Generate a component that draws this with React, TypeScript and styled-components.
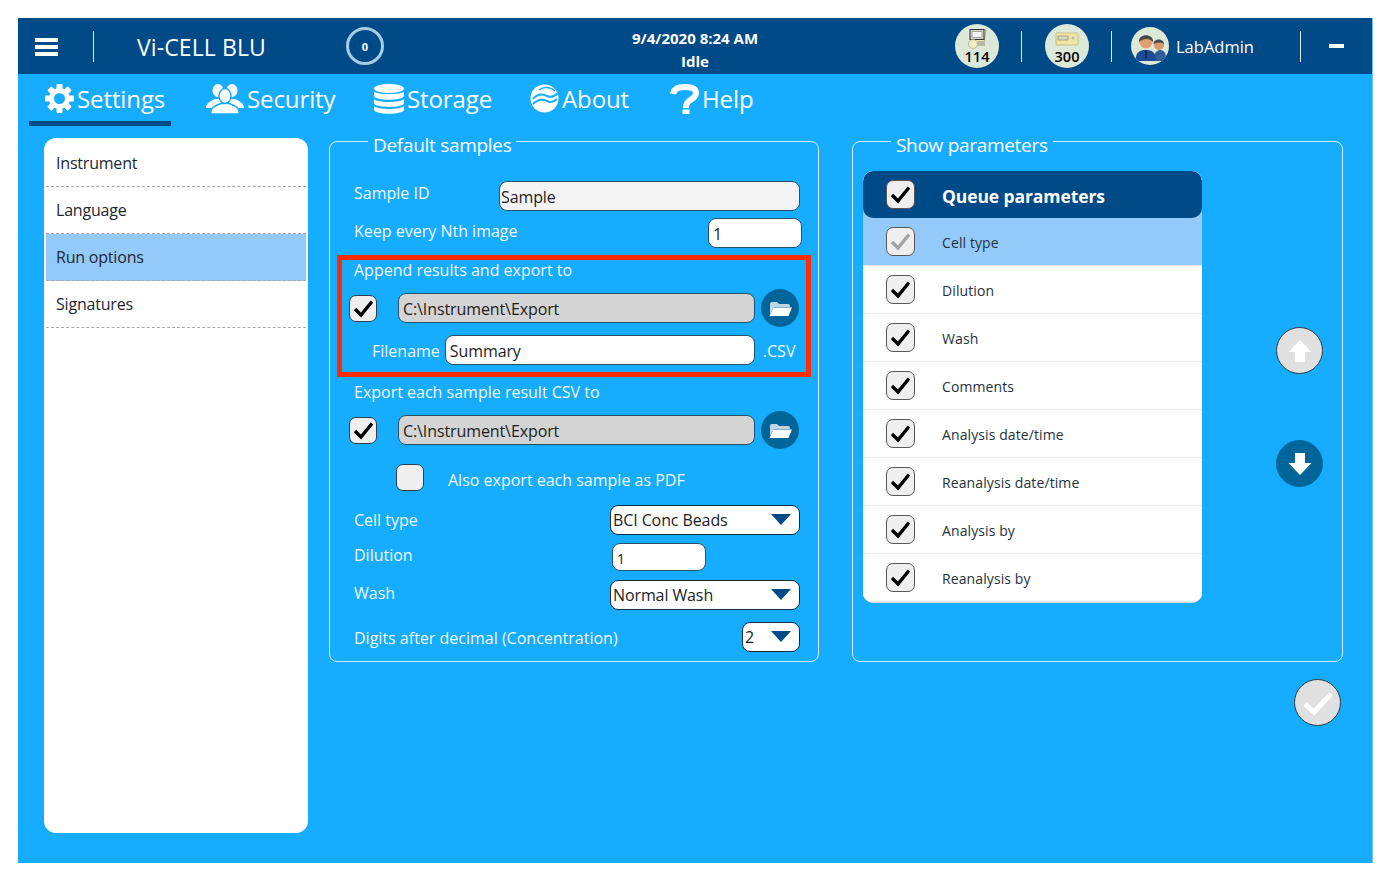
import React from "react";
import styled, { createGlobalStyle } from "styled-components";

const FONT = `"Open Sans", "Noto Sans", "Liberation Sans", sans-serif`;

const GlobalStyle = createGlobalStyle`
    html, body {
        margin: 0;
        padding: 0;
        background: #ffffff;
    }
    body {
        padding: 18px 0 0 18px;
        font-family: ${FONT};
    }
`;

const Window = styled.div`
    width: 1354px;
    height: 845px;
    background: #16acff;
    border-right: 1px solid #6ec3f7;
    display: flex;
    flex-direction: column;
`;

const Header = styled.header`
    height: 56px;
    flex: none;
    background: #004a87;
    color: #ffffff;
    display: flex;
    align-items: center;
    padding-left: 17px;
    box-sizing: border-box;
`;

const Hamburger = styled.div`
    width: 23px;
    height: 18px;
    margin-top: 2px;
    display: flex;
    flex-direction: column;
    justify-content: space-between;
    span {
        display: block;
        height: 4px;
        background: #ffffff;
    }
`;

const Divider = styled.div<{ $left: number }>`
    width: 1px;
    height: 31px;
    margin-left: ${({ $left }) => $left}px;
    margin-top: 1px;
    background: #dce9f2;
    flex: none;
`;

const Title = styled.div`
    margin-left: 43px;
    width: 209px;
    font-size: 23px;
    letter-spacing: 0.1px;
    line-height: 30px;
    margin-top: 2px;
    white-space: nowrap;
`;

const Counter = styled.div`
    width: 38px;
    height: 38px;
    box-sizing: border-box;
    border: 3px solid #a5cde5;
    border-radius: 50%;
    font-size: 11px;
    font-weight: 700;
    display: flex;
    align-items: center;
    justify-content: center;
    flex: none;
`;

const Status = styled.div`
    width: 210px;
    margin-left: 206px;
    text-align: center;
    font-size: 15px;
    font-weight: 700;
    line-height: 23px;
    margin-top: 8px;
    white-space: nowrap;
`;

const Consumable = styled.div<{ $left: number }>`
    width: 44px;
    height: 44px;
    margin-left: ${({ $left }) => $left}px;
    border-radius: 50%;
    background: #dce8d8;
    flex: none;
    display: flex;
    flex-direction: column;
    align-items: center;
    color: #000000;
    font-size: 14.5px;
    font-weight: 600;
    line-height: 15px;
    svg {
        margin-top: 5px;
        height: 20px;
        flex: none;
    }
`;

const Avatar = styled.div`
    width: 38px;
    height: 38px;
    margin-left: 19px;
    border-radius: 50%;
    background: #dce8d8;
    overflow: hidden;
    flex: none;
`;

const UserName = styled.div`
    width: 124px;
    margin-left: 7px;
    font-size: 16.5px;
    font-weight: 500;
    margin-top: 1px;
`;

const MinimizeBar = styled.div`
    width: 15px;
    height: 4px;
    margin-left: 28px;
    background: #ffffff;
`;

const TabBar = styled.nav`
    height: 52px;
    flex: none;
    display: flex;
    padding-left: 11px;
    color: #ffffff;
`;

const Tab = styled.div<{ $width: number; $gap: number; $pad?: number; $active?: boolean }>`
    width: ${({ $width }) => $width}px;
    margin-right: ${({ $gap }) => $gap}px;
    padding: 2px 0 0 ${({ $pad }) => $pad ?? 0}px;
    box-sizing: border-box;
    height: 52px;
    display: flex;
    align-items: center;
    gap: 3px;
    font-size: 24px;
    letter-spacing: -0.1px;
    border-bottom: 5px solid ${({ $active }) => ($active ? "#004a87" : "transparent")};
    white-space: nowrap;
    svg {
        flex: none;
    }
`;

const Content = styled.main`
    flex: 1;
    display: flex;
    gap: 21px;
    padding: 12px 0 30px 26px;
    min-height: 0;
`;

const Sidebar = styled.aside`
    width: 264px;
    box-sizing: border-box;
    padding: 2px 2px 0;
    background: #ffffff;
    border-radius: 12px;
`;

const SidebarItem = styled.div<{ $selected?: boolean }>`
    height: 47px;
    box-sizing: border-box;
    padding-left: 10px;
    display: flex;
    align-items: center;
    font-size: 16px;
    letter-spacing: -0.2px;
    color: #1c2733;
    background: ${({ $selected }) => ($selected ? "#94caf9" : "transparent")};
    border-bottom: 1px dashed #a8a8a8;
`;

const MainColumn = styled.div`
    display: flex;
    flex-direction: column;
    align-items: flex-end;
    padding-top: 3px;
`;

const Panels = styled.div`
    display: flex;
    gap: 33px;
`;

const Panel = styled.section<{ $width: number }>`
    position: relative;
    width: ${({ $width }) => $width}px;
    height: 521px;
    box-sizing: border-box;
    border: 1px solid #d6eeff;
    border-radius: 8px;
`;

const Legend = styled.div`
    position: absolute;
    top: -10px;
    left: 38px;
    padding: 0 5px;
    background: #16acff;
    color: #ffffff;
    font-size: 19px;
    letter-spacing: -0.3px;
    line-height: 26px;
    white-space: nowrap;
`;

const FormBody = styled.div`
    display: flex;
    flex-direction: column;
    padding: 39px 18px 0 7px;
`;

const FormRow = styled.div<{ $height: number; $top?: number; $right?: number }>`
    height: ${({ $height }) => $height}px;
    margin-top: ${({ $top }) => $top ?? 0}px;
    padding: 0 ${({ $right }) => $right ?? 0}px 0 17px;
    display: flex;
    align-items: center;
    justify-content: space-between;
    flex: none;
`;

const Label = styled.div<{ $up?: number }>`
    color: #f2f9ff;
    font-size: 16px;
    white-space: nowrap;
    margin-top: ${({ $up }) => -($up ?? 0)}px;
`;

const TextBox = styled.div<{ $width: number; $height?: number; $pad?: number; $tone?: "white" | "light" | "grey" }>`
    width: ${({ $width }) => $width}px;
    height: ${({ $height }) => $height ?? 30}px;
    box-sizing: border-box;
    flex: none;
    display: flex;
    align-items: center;
    padding: 2px 0 0 ${({ $pad }) => $pad ?? 3}px;
    background: ${({ $tone }) =>
        $tone === "grey" ? "#d4d4d4" : $tone === "light" ? "#f4f4f4" : "#ffffff"};
    border: 1px solid #24506e;
    border-radius: 8px;
    color: #1d1d1d;
    font-size: 16px;
    letter-spacing: -0.1px;
    white-space: nowrap;
`;

const KeepBox = styled(TextBox)`
    margin-right: -2px;
`;

const DilutionBox = styled(TextBox)`
    font-size: 14px;
`;

const PathBox = styled(TextBox)`
    margin-left: 21px;
`;

const FilenameBox = styled(TextBox)`
    margin-left: 5px;
`;

const Select = styled(TextBox)`
    justify-content: space-between;
    padding: 0 8px 0 2px;
    border-color: #0b2c44;
`;

const Caret = styled.span`
    width: 0;
    height: 0;
    border-left: 10px solid transparent;
    border-right: 10px solid transparent;
    border-top: 11px solid #004a87;
    margin-top: -2px;
`;

const Highlight = styled.div`
    margin-top: 7px;
    width: 474px;
    height: 122px;
    box-sizing: border-box;
    border: 5px solid #ff2a00;
    flex: none;
`;

const HighlightLabel = styled(Label)`
    padding-left: 12px;
    line-height: 20px;
`;

const PathRow = styled.div<{ $top: number; $left: number; $height?: number }>`
    display: flex;
    align-items: center;
    height: ${({ $height }) => $height ?? 38}px;
    margin-top: ${({ $top }) => $top}px;
    margin-left: ${({ $left }) => $left}px;
    flex: none;
`;

const PdfLabel = styled(Label)`
    margin-left: 24px;
`;

const CheckFrame = styled.div<{ $small?: boolean }>`
    width: ${({ $small }) => ($small ? 28 : 29)}px;
    height: ${({ $small }) => ($small ? 27 : 29)}px;
    box-sizing: border-box;
    flex: none;
    display: flex;
    align-items: center;
    justify-content: center;
    background: #efefef;
    border: 1px solid ${({ $small }) => ($small ? "#2b3f4c" : "#555555")};
    border-radius: 7px;
    svg {
        width: 21px;
        height: 19px;
    }
`;

const FolderButton = styled.div`
    width: 38px;
    height: 38px;
    margin-left: 6px;
    border-radius: 50%;
    background: #00669a;
    display: flex;
    align-items: center;
    justify-content: center;
    flex: none;
`;

const CsvLabel = styled.div`
    margin: 2px 0 0 8px;
    color: #f2f9ff;
    font-size: 16px;
`;

const SplitPanel = styled.div`
    display: flex;
    padding: 29px 0 0 10px;
`;

const QueueTable = styled.div`
    width: 339px;
    height: 432px;
    background: #ffffff;
    border-radius: 10px;
    flex: none;
    border-bottom: 1px solid #dedede;
    box-sizing: border-box;
    overflow: hidden;
`;

const QueueHeader = styled.div`
    height: 47px;
    background: #004a87;
    border-radius: 10px;
    display: flex;
    align-items: center;
    padding-left: 23px;
    color: #ffffff;
    font-size: 17.5px;
    font-weight: 700;
    letter-spacing: -0.1px;
`;

const HeaderBack = styled.div`
    background: #94caf9;
`;

const QueueRow = styled.div<{ $selected?: boolean }>`
    height: 48px;
    box-sizing: border-box;
    display: flex;
    align-items: center;
    padding-left: 23px;
    color: #25313d;
    font-size: 14px;
    letter-spacing: 0.1px;
    background: ${({ $selected }) => ($selected ? "#94caf9" : "#ffffff")};
    border-bottom: 1px solid #e6e6e6;
`;

const RowText = styled.span`
    margin: 2px 0 0 27px;
`;

const ArrowColumn = styled.div`
    margin-left: 74px;
    padding-top: 156px;
    display: flex;
    flex-direction: column;
    gap: 66px;
`;

const RoundButton = styled.div<{ $active?: boolean }>`
    width: 47px;
    height: 47px;
    box-sizing: border-box;
    border-radius: 50%;
    display: flex;
    align-items: center;
    justify-content: center;
    background: ${({ $active }) => ($active ? "#00669a" : "#e0e0e0")};
    border: 1px solid ${({ $active }) => ($active ? "#00669a" : "#2d3a44")};
`;

const Footer = styled.div`
    margin-top: 17px;
    margin-right: 2px;
`;

const Check = ({ dim }: { dim?: boolean }) => (
    <svg viewBox="0 0 21 19">
        <path
            d="M2 10 L8 16 L19 2.5"
            fill="none"
            stroke={dim ? "#a3a3a3" : "#000000"}
            strokeWidth="3.4"
        />
    </svg>
);

const Checkbox = ({ dim }: { dim?: boolean }) => (
    <CheckFrame>
        <Check dim={dim} />
    </CheckFrame>
);

const SmallCheckbox = ({ checked = true }: { checked?: boolean }) => (
    <CheckFrame $small>{checked ? <Check /> : null}</CheckFrame>
);

const FolderIcon = () => (
    <svg width="23" height="15" viewBox="0 0 23 15">
        <path d="M1 3 Q1 1 3 1 H8 L10 3 H19 Q21 3 21 5 V6 H5 L1 13 Z" fill="#bcd6e6" />
        <path d="M4.5 6.5 H23 L19.5 15 H0.5 Z" fill="#ffffff" />
    </svg>
);

const GearIcon = () => (
    <svg width="29" height="29" viewBox="0 0 29 29">
        {[0, 45, 90, 135, 180, 225, 270, 315].map((angle) => (
            <rect
                key={angle}
                x="11.5"
                y="0"
                width="6"
                height="6"
                rx="1"
                fill="#ffffff"
                transform={`rotate(${angle} 14.5 14.5)`}
            />
        ))}
        <circle cx="14.5" cy="14.5" r="8" fill="none" stroke="#ffffff" strokeWidth="5" />
    </svg>
);

const PeopleIcon = () => (
    <svg width="38" height="30" viewBox="0 0 38 30">
        <ellipse cx="12" cy="6.5" rx="5.5" ry="6.5" fill="#ffffff" />
        <ellipse cx="26" cy="6.5" rx="5.5" ry="6.5" fill="#ffffff" />
        <path d="M0 24 C0 19 5 17 9 15 H15 V24 Z" fill="#ffffff" />
        <path d="M38 24 C38 19 33 17 29 15 H23 V24 Z" fill="#ffffff" />
        <ellipse cx="19" cy="12" rx="6" ry="7.5" fill="#ffffff" stroke="#16acff" strokeWidth="1.4" />
        <path
            d="M5 30 V27 C5 23 11 21 15 19.5 H23 C27 21 33 23 33 27 V30 Z"
            fill="#ffffff"
            stroke="#16acff"
            strokeWidth="1.4"
        />
    </svg>
);

const DatabaseIcon = () => (
    <svg width="30" height="30" viewBox="0 0 30 30">
        <ellipse cx="15" cy="4.5" rx="15" ry="4.5" fill="#ffffff" />
        <path d="M0 7.5 C2 11 28 11 30 7.5 V12 C28 17 2 17 0 12 Z" fill="#ffffff" />
        <path d="M0 15 C2 19 28 19 30 15 V19.5 C28 24 2 24 0 19.5 Z" fill="#ffffff" />
        <path d="M0 22 C2 26 28 26 30 22 V26 C28 31 2 31 0 26 Z" fill="#ffffff" />
    </svg>
);

const GlobeIcon = () => (
    <svg width="29" height="29" viewBox="0 0 29 29">
        <circle cx="14.5" cy="14.5" r="14" fill="#ffffff" />
        <path d="M3 15 C8 9 13 10 17 12 C21 14 24 13 28 9" fill="none" stroke="#16acff" strokeWidth="2" />
        <path d="M3 20 C8 15 13 15 17 17 C21 19 24 18 27 15" fill="none" stroke="#16acff" strokeWidth="2" />
        <path d="M9 6 C14 2 21 3 25 7" fill="none" stroke="#16acff" strokeWidth="1.5" />
    </svg>
);

const QuestionIcon = () => (
    <svg width="29" height="30" viewBox="0 0 29 30">
        <path
            d="M3 10 C4 4 9 3 15 3 C22 3 26 5 26 9 C26 14 21 15 18 18 C16 20 16 21 16 24"
            fill="none"
            stroke="#ffffff"
            strokeWidth="6"
        />
        <rect x="12.5" y="25.5" width="7" height="4.5" fill="#ffffff" />
    </svg>
);

const InstrumentIcon = () => (
    <svg viewBox="0 0 22 20" width="22">
        <path d="M8 1 H20 L18 14 H8 Z" fill="#f1e6b0" stroke="#9a9468" strokeWidth="0.7" />
        <rect x="4" y="0.5" width="14" height="10" fill="#d5d5d5" stroke="#333333" />
        <rect x="6" y="2.5" width="10" height="6" fill="#f4f4f4" stroke="#777777" strokeWidth="0.6" />
        <circle cx="7" cy="15" r="4.5" fill="#f3edc8" stroke="#a8a27a" strokeWidth="0.7" />
        <rect x="12" y="12" width="7" height="5" fill="#b9b9a5" />
    </svg>
);

const ReagentIcon = () => (
    <svg viewBox="0 0 26 20" width="26">
        <rect x="2" y="4" width="22" height="12" rx="1" fill="#f2e6a6" stroke="#b9ad72" strokeWidth="0.7" />
        <rect x="4" y="7" width="10" height="4" fill="#d9d9c4" stroke="#777766" strokeWidth="0.6" />
        <circle cx="19" cy="9" r="1.6" fill="#b8b8a0" />
    </svg>
);

const UsersIcon = () => (
    <svg width="38" height="38" viewBox="0 0 38 38">
        <path d="M23 31 C23 25 27 23 29 23 C33 23 35 26 35 31 L34 34 H23 Z" fill="#2e5e9e" />
        <circle cx="28" cy="18" r="5" fill="#d99a6c" />
        <path d="M22.5 17 C22.5 11 33 11 33 17 C30 15 26 15 22.5 17 Z" fill="#4a4a4a" />
        <path d="M5 34 C4 25 9 23 15 23 C21 23 25 25 25 34 Z" fill="#1f4a96" />
        <circle cx="15" cy="15" r="6.5" fill="#e0a070" />
        <path d="M8 15 C7 6 23 6 22 15 C19 11 12 11 8 15 Z" fill="#4a4a4a" />
        <path d="M15 23 V32" stroke="#0d2450" strokeWidth="1.5" />
    </svg>
);

const QUEUE_ROWS = [
    "Cell type",
    "Dilution",
    "Wash",
    "Comments",
    "Analysis date/time",
    "Reanalysis date/time",
    "Analysis by",
    "Reanalysis by",
];

const SIDEBAR_ITEMS = ["Instrument", "Language", "Run options", "Signatures"];

export default function App() {
    return (
        <>
            <GlobalStyle />
            <Window>
                <Header>
                    <Hamburger>
                        <span />
                        <span />
                        <span />
                    </Hamburger>
                    <Divider $left={35} />
                    <Title>Vi-CELL BLU</Title>
                    <Counter>0</Counter>
                    <Status>
                        <div>9/4/2020 8:24 AM</div>
                        <div>Idle</div>
                    </Status>
                    <Consumable $left={155}>
                        <InstrumentIcon />
                        <span>114</span>
                    </Consumable>
                    <Divider $left={22} />
                    <Consumable $left={23}>
                        <ReagentIcon />
                        <span>300</span>
                    </Consumable>
                    <Divider $left={22} />
                    <Avatar>
                        <UsersIcon />
                    </Avatar>
                    <UserName>LabAdmin</UserName>
                    <Divider $left={0} />
                    <MinimizeBar />
                </Header>
                <TabBar>
                    <Tab $width={142} $gap={35} $pad={16} $active>
                        <GearIcon />
                        Settings
                    </Tab>
                    <Tab $width={130} $gap={38}>
                        <PeopleIcon />
                        Security
                    </Tab>
                    <Tab $width={118} $gap={38}>
                        <DatabaseIcon />
                        Storage
                    </Tab>
                    <Tab $width={101} $gap={39}>
                        <GlobeIcon />
                        About
                    </Tab>
                    <Tab $width={84} $gap={0}>
                        <QuestionIcon />
                        Help
                    </Tab>
                </TabBar>
                <Content>
                    <Sidebar>
                        {SIDEBAR_ITEMS.map((item) => (
                            <SidebarItem key={item} $selected={item === "Run options"}>
                                {item}
                            </SidebarItem>
                        ))}
                    </Sidebar>
                    <MainColumn>
                        <Panels>
                            <Panel $width={490}>
                                <Legend>Default samples</Legend>
                                <FormBody>
                                    <FormRow $height={30}>
                                        <Label $up={6}>Sample ID</Label>
                                        <TextBox $width={301} $tone="light" $pad={1}>
                                            Sample
                                        </TextBox>
                                    </FormRow>
                                    <FormRow $height={30} $top={7}>
                                        <Label $up={4}>Keep every Nth image</Label>
                                        <KeepBox $width={94} $pad={4}>1</KeepBox>
                                    </FormRow>
                                    <Highlight>
                                        <HighlightLabel>Append results and export to</HighlightLabel>
                                        <PathRow $top={9} $left={7}>
                                            <SmallCheckbox />
                                            <PathBox $width={357} $tone="grey" $pad={4}>
                                                C:\Instrument\Export
                                            </PathBox>
                                            <FolderButton>
                                                <FolderIcon />
                                            </FolderButton>
                                        </PathRow>
                                        <PathRow $top={4} $left={30}>
                                            <Label $up={-2}>Filename</Label>
                                            <FilenameBox $width={310} $pad={4}>
                                                Summary
                                            </FilenameBox>
                                            <CsvLabel>.CSV</CsvLabel>
                                        </PathRow>
                                    </Highlight>
                                    <FormRow $height={20} $top={5}>
                                        <Label>Export each sample result CSV to</Label>
                                    </FormRow>
                                    <PathRow $top={9} $left={12}>
                                        <SmallCheckbox />
                                        <PathBox $width={357} $tone="grey" $pad={4}>
                                            C:\Instrument\Export
                                        </PathBox>
                                        <FolderButton>
                                            <FolderIcon />
                                        </FolderButton>
                                    </PathRow>
                                    <PathRow $top={14} $left={59} $height={28}>
                                        <SmallCheckbox checked={false} />
                                        <PdfLabel $up={-6}>Also export each sample as PDF</PdfLabel>
                                    </PathRow>
                                    <FormRow $height={30} $top={14}>
                                        <Label>Cell type</Label>
                                        <Select $width={190}>
                                            BCI Conc Beads
                                            <Caret />
                                        </Select>
                                    </FormRow>
                                    <FormRow $height={28} $top={8} $right={94}>
                                        <Label $up={4}>Dilution</Label>
                                        <DilutionBox $width={94} $height={28} $pad={4}>
                                            1
                                        </DilutionBox>
                                    </FormRow>
                                    <FormRow $height={30} $top={9}>
                                        <Label $up={4}>Wash</Label>
                                        <Select $width={190}>
                                            Normal Wash
                                            <Caret />
                                        </Select>
                                    </FormRow>
                                    <FormRow $height={30} $top={12}>
                                        <Label $up={-2}>Digits after decimal (Concentration)</Label>
                                        <Select $width={58}>
                                            2
                                            <Caret />
                                        </Select>
                                    </FormRow>
                                </FormBody>
                            </Panel>
                            <Panel $width={491}>
                                <Legend>Show parameters</Legend>
                                <SplitPanel>
                                    <QueueTable>
                                        <HeaderBack>
                                            <QueueHeader>
                                                <Checkbox />
                                                <RowText>Queue parameters</RowText>
                                            </QueueHeader>
                                        </HeaderBack>
                                        {QUEUE_ROWS.map((row, i) => (
                                            <QueueRow key={row} $selected={i === 0}>
                                                <Checkbox dim={i === 0} />
                                                <RowText>{row}</RowText>
                                            </QueueRow>
                                        ))}
                                    </QueueTable>
                                    <ArrowColumn>
                                        <RoundButton>
                                            <svg width="24" height="24" viewBox="0 0 24 24">
                                                <path d="M12 1 L23.5 13 H17 V23 H7 V13 H0.5 Z" fill="#ffffff" />
                                            </svg>
                                        </RoundButton>
                                        <RoundButton $active>
                                            <svg width="24" height="24" viewBox="0 0 24 24">
                                                <path d="M12 23 L23.5 11 H17 V1 H7 V11 H0.5 Z" fill="#ffffff" />
                                            </svg>
                                        </RoundButton>
                                    </ArrowColumn>
                                </SplitPanel>
                            </Panel>
                        </Panels>
                        <Footer>
                            <RoundButton>
                                <svg width="30" height="24" viewBox="0 0 30 24">
                                    <path d="M2 13 L11 21 L28 3" fill="none" stroke="#ffffff" strokeWidth="5" />
                                </svg>
                            </RoundButton>
                        </Footer>
                    </MainColumn>
                </Content>
            </Window>
        </>
    );
}
